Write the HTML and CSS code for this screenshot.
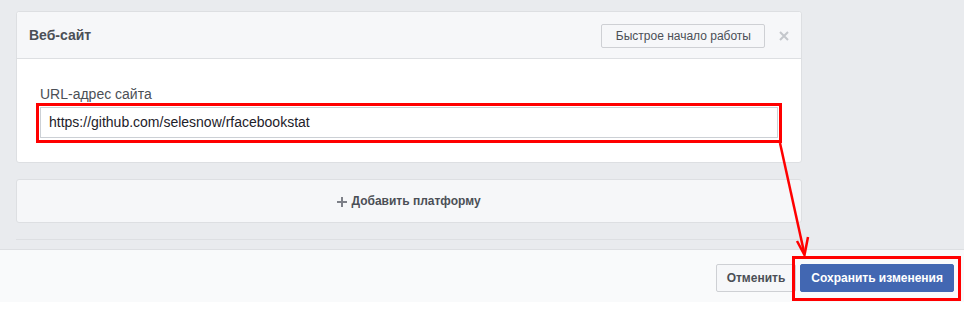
FILE: index.html
```html
<!DOCTYPE html>
<html lang="ru">
<head>
    <meta charset="UTF-8">
    <title>Веб-сайт</title>
    <link rel="stylesheet" href="styles.css">
</head>
<body>
    <div class="page">
        <div class="content">
            <div class="card">
                <div class="card-header">
                    <div class="card-title">Веб-сайт</div>
                    <button class="btn btn-light quick-start">Быстрое начало работы</button>
                    <svg class="close" width="10" height="10" viewBox="0 0 10 10">
                        <path d="M1 1 L9 9 M9 1 L1 9" stroke="#c4c7cc" stroke-width="2"/>
                    </svg>
                </div>
                <div class="card-body">
                    <label class="field-label">URL-адрес сайта</label>
                    <div class="mark mark-input">
                        <div class="field-input">https://github.com/selesnow/rfacebookstat</div>
                    </div>
                </div>
            </div>

            <div class="add-platform">
                <svg class="plus" width="10" height="10" viewBox="0 0 10 10">
                    <rect x="4" y="0" width="2" height="10" fill="#7d8088"/>
                    <rect x="0" y="4" width="10" height="2" fill="#7d8088"/>
                </svg>
                <span>Добавить платформу</span>
            </div>

            <div class="next-section"></div>
        </div>

        <div class="footer">
            <button class="btn btn-light">Отменить</button>
            <span class="mark mark-save">
                <button class="btn btn-primary">Сохранить изменения</button>
            </span>
        </div>

        <!-- annotation arrow -->
        <svg class="arrow" width="964" height="315" viewBox="0 0 964 315">
            <line x1="780" y1="143" x2="804" y2="252" stroke="#f00" stroke-width="2.5"/>
            <polyline points="797,241 804.5,255 808,237" fill="none" stroke="#f00" stroke-width="2.5"/>
        </svg>
    </div>
</body>
</html>
```

FILE: styles.css
```css
* {
    margin: 0;
    padding: 0;
    box-sizing: border-box;
}

body {
    font-family: "Liberation Sans", Arial, sans-serif;
    background: #ffffff;
    color: #4b4f56;
    width: 964px;
    height: 315px;
    overflow: hidden;
}

.page {
    position: relative;
    background: #e9ebee;
}

.content {
    width: 786px;
    margin-left: 16px;
    padding-top: 11px;
}

.card {
    background: #ffffff;
    border: 1px solid #dddfe2;
    border-radius: 3px;
}

.card-header {
    display: flex;
    align-items: center;
    height: 47px;
    padding: 0 12px;
    background: #f6f7f9;
    border-bottom: 1px solid #dddfe2;
    border-radius: 3px 3px 0 0;
}

.card-title {
    flex: 1;
    font-size: 14px;
    font-weight: bold;
    color: #4b4f56;
}

.btn {
    font-family: inherit;
    font-size: 12px;
    line-height: 22px;
    border-radius: 2px;
    cursor: pointer;
}

.btn-light {
    background: #f6f7f9;
    border: 1px solid #ced0d4;
    color: #4b4f56;
    font-weight: bold;
    height: 28px;
    padding: 0 10px;
}

.quick-start {
    font-weight: normal;
    height: 24px;
    padding: 0 13px 0 14px;
    margin-top: 1px;
}

.close {
    margin-left: 14px;
    margin-top: 1px;
}

.card-body {
    padding: 27px 23px 24px 23px;
}

.field-label {
    display: block;
    font-size: 14px;
    line-height: 16px;
    color: #4b4f56;
    margin-bottom: 5px;
}

.field-input {
    height: 31px;
    border: 1px solid #ccd0d5;
    padding: 0 8px;
    font-size: 14px;
    line-height: 29px;
    color: #1d2129;
    background: #fff;
}

/* red annotation frames */
.mark {
    display: block;
    border: 3px solid #f00;
}

.mark-input {
    margin: -4px -4px -5px -4px;
    padding: 1px 1px 2px 1px;
}

.mark-save {
    display: flex;
    margin: -8px -7px -9px -8px;
    padding: 5px 4px 6px 5px;
    height: 45px;
}

.add-platform {
    display: flex;
    align-items: center;
    justify-content: center;
    gap: 4px;
    height: 44px;
    margin-top: 16px;
    background: #f6f7f9;
    border: 1px solid #dddfe2;
    border-radius: 3px;
    font-size: 12px;
    font-weight: bold;
    color: #4b4f56;
}

.plus {
    margin-top: 1px;
}

.next-section {
    height: 10px;
    margin-top: 16px;
    border-top: 1px solid #dddfe2;
}

.footer {
    display: flex;
    justify-content: flex-end;
    align-items: flex-start;
    gap: 4px;
    height: 53px;
    padding: 14px 10px 0 0;
    background: #f9fafb;
    border-top: 1px solid #dddfe2;
}

.btn-primary {
    background: #4267b2;
    border: 1px solid #4267b2;
    color: #ffffff;
    font-weight: bold;
    height: 28px;
    padding: 0 10px;
}

.arrow {
    position: absolute;
    left: 0;
    top: 0;
    pointer-events: none;
}
```
